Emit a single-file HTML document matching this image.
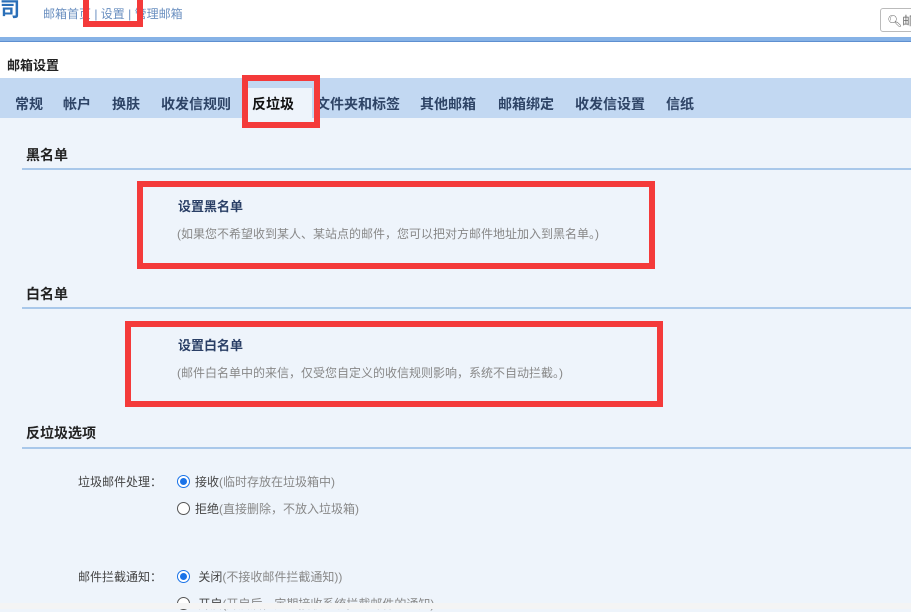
<!DOCTYPE html>
<html><head><meta charset="utf-8"><style>
*{margin:0;padding:0;box-sizing:border-box}
body{width:911px;height:609px;overflow:hidden;background:#eef4fb;font-family:"Liberation Sans","Noto Sans CJK SC",sans-serif;position:relative;font-size:13px}
.a{position:absolute;white-space:nowrap}
.red{position:absolute;border:6px solid #f43a3a}
.hline{position:absolute;left:22px;right:0;height:2px;background:#a9c8ea}
.h{font-size:14px;font-weight:bold;color:#222}
.t{position:absolute;top:94px;font-size:14px;font-weight:bold;color:#2e4466;white-space:nowrap}
.radio{display:inline-block;width:13px;height:13px;border-radius:50%;border:1px solid #555;background:#fff;vertical-align:-2px;margin-right:5px;position:relative}
.radio.on{border:1px solid #1a73e8}
.radio.on:after{content:"";position:absolute;left:2px;top:2px;width:7px;height:7px;border-radius:50%;background:#1a73e8}
</style></head><body>
<div class="a" style="left:0;top:0;width:911px;height:37px;background:#fff"></div>
<div class="a" style="left:-20px;top:-7px;font-size:20px;font-weight:bold;color:#2a6fb8">公司</div>
<div class="a" style="left:43px;top:5px;color:#6a8fc0;font-size:12px">邮箱首页 | 设置 | 管理邮箱</div>
<div class="a" style="left:880px;top:8px;width:40px;height:24px;border:1px solid #bbb;border-radius:3px;background:#fff;font-size:12px;color:#666;padding:3px 0 0 6px">🔍︎邮</div>
<div class="a" style="left:0;top:37px;width:911px;height:5px;background:#86b2e6;border-bottom:1px solid #5e8fd0"></div>
<div class="a" style="left:0;top:42px;width:911px;height:36px;background:#fff"></div>
<div class="a h" style="left:7px;top:55px;font-size:13px">邮箱设置</div>
<div class="a" style="left:0;top:78px;width:911px;height:40px;background:#c2d8f2"></div>
<div class="a" style="left:242px;top:88px;width:70px;height:30px;background:#eef4fb"></div>
<span class="t" style="left:15px">常规</span>
<span class="t" style="left:63px">帐户</span>
<span class="t" style="left:112px">换肤</span>
<span class="t" style="left:161px">收发信规则</span>
<span class="t" style="left:252px;color:#111">反垃圾</span>
<span class="t" style="left:316px">文件夹和标签</span>
<span class="t" style="left:420px">其他邮箱</span>
<span class="t" style="left:498px">邮箱绑定</span>
<span class="t" style="left:575px">收发信设置</span>
<span class="t" style="left:666px">信纸</span>
<div class="a h" style="left:26px;top:145px">黑名单</div>
<div class="hline" style="top:168px"></div>
<div class="a" style="left:178px;top:196px;font-size:13px;font-weight:bold;color:#2a3f66">设置黑名单</div>
<div class="a" style="left:177px;top:225px;font-size:12px;color:#888">(如果您不希望收到某人、某站点的邮件，您可以把对方邮件地址加入到黑名单。)</div>
<div class="a h" style="left:26px;top:284px">白名单</div>
<div class="hline" style="top:307px"></div>
<div class="a" style="left:178px;top:335px;font-size:13px;font-weight:bold;color:#2a3f66">设置白名单</div>
<div class="a" style="left:177px;top:364px;font-size:12px;color:#888">(邮件白名单中的来信，仅受您自定义的收信规则影响，系统不自动拦截。)</div>
<div class="a h" style="left:26px;top:423px">反垃圾选项</div>
<div class="hline" style="top:447px"></div>
<div class="a" style="left:78px;top:473px;font-size:12px;color:#444">垃圾邮件处理：</div>
<div class="a" style="left:177px;top:473px;font-size:12px;color:#444"><span class="radio on"></span>接收<span style="color:#888">(临时存放在垃圾箱中)</span></div>
<div class="a" style="left:177px;top:500px;font-size:12px;color:#444"><span class="radio"></span>拒绝<span style="color:#888">(直接删除，不放入垃圾箱)</span></div>
<div class="a" style="left:78px;top:568px;font-size:12px;color:#444">邮件拦截通知：</div>
<div class="a" style="left:177px;top:568px;font-size:12px;color:#444"><span class="radio on"></span> 关闭<span style="color:#888">(不接收邮件拦截通知))</span></div>
<div class="a" style="left:177px;top:595px;font-size:12px;color:#444"><span class="radio"></span> 开启<span style="color:#888">(开启后，定期接收系统拦截邮件的通知)</span></div>
<div class="a" style="left:0;top:603px;width:911px;height:6px;background:#f4f4f4"></div>
<div class="red" style="left:83px;top:-6px;width:60px;height:33px"></div>
<div class="red" style="left:242px;top:75px;width:78px;height:53px"></div>
<div class="red" style="left:137px;top:181px;width:518px;height:88px"></div>
<div class="red" style="left:125px;top:321px;width:538px;height:86px"></div>
</body></html>
